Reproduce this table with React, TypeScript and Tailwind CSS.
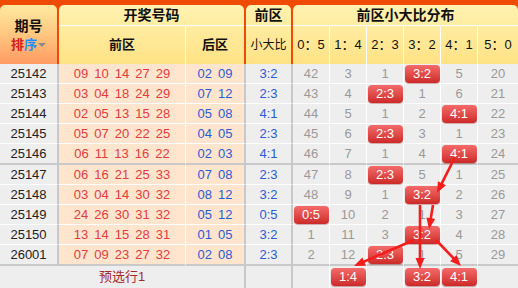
import React from "react";

type Row = {
  no: string;
  front: string[];
  back: string[];
  ratio: string;
  dist: number[];
  hit: number;
};

const labels = ["0:5", "1:4", "2:3", "3:2", "4:1", "5:0"];

const rows: Row[] = [
  { no: "25142", front: ["09", "10", "14", "27", "29"], back: ["02", "09"], ratio: "3:2", dist: [42, 3, 1, 0, 5, 20], hit: 3 },
  { no: "25143", front: ["03", "04", "18", "24", "29"], back: ["07", "12"], ratio: "2:3", dist: [43, 4, 0, 1, 6, 21], hit: 2 },
  { no: "25144", front: ["02", "05", "13", "15", "28"], back: ["05", "08"], ratio: "4:1", dist: [44, 5, 1, 2, 0, 22], hit: 4 },
  { no: "25145", front: ["05", "07", "20", "22", "25"], back: ["04", "05"], ratio: "2:3", dist: [45, 6, 0, 3, 1, 23], hit: 2 },
  { no: "25146", front: ["06", "11", "13", "16", "22"], back: ["02", "03"], ratio: "4:1", dist: [46, 7, 1, 4, 0, 24], hit: 4 },
  { no: "25147", front: ["06", "16", "21", "25", "33"], back: ["07", "08"], ratio: "2:3", dist: [47, 8, 0, 5, 1, 25], hit: 2 },
  { no: "25148", front: ["03", "04", "14", "30", "32"], back: ["08", "12"], ratio: "3:2", dist: [48, 9, 1, 0, 2, 26], hit: 3 },
  { no: "25149", front: ["24", "26", "30", "31", "32"], back: ["05", "12"], ratio: "0:5", dist: [0, 10, 2, 1, 3, 27], hit: 0 },
  { no: "25150", front: ["13", "14", "15", "28", "31"], back: ["01", "05"], ratio: "3:2", dist: [1, 11, 3, 0, 4, 28], hit: 3 },
  { no: "26001", front: ["07", "09", "23", "27", "32"], back: ["02", "08"], ratio: "2:3", dist: [2, 12, 0, 1, 5, 29], hit: 2 },
];

const arrows = [
  [455, 157, 437, 193],
  [433, 205, 429, 229],
  [420, 205, 420, 269],
  [414, 240, 354, 266],
  [436, 240, 461, 266],
];

const Badge = ({ text }: { text: string }) => (
  <span className="flex h-[18px] w-[35px] items-center justify-center rounded-[4px] bg-linear-to-b from-[#f46a6a] to-[#cc2828] text-[13px] text-white shadow-[0_1px_1px_rgba(120,0,0,0.35)]">
    {text}
  </span>
);

const Arrow = ({ a }: { a: number[] }) => {
  const [x1, y1, x2, y2] = a;
  const L = Math.hypot(x2 - x1, y2 - y1);
  const ux = (x2 - x1) / L;
  const uy = (y2 - y1) / L;
  const bx = x2 - ux * 11;
  const by = y2 - uy * 11;
  const pts = `${x2},${y2} ${bx - uy * 4.5},${by + ux * 4.5} ${bx + uy * 4.5},${by - ux * 4.5}`;
  return (
    <g>
      <line x1={x1} y1={y1} x2={bx + ux * 2} y2={by + uy * 2} stroke="#f51c1c" strokeWidth={2.6} />
      <polygon points={pts} fill="#f51c1c" />
    </g>
  );
};

export default function App() {
  return (
    <div className="relative h-[288px] w-[518px] overflow-hidden bg-white font-['Liberation_Sans','Noto_Sans_CJK_SC',sans-serif] text-[13px]">
      {/* header */}
      <div className="flex h-[64px] bg-[#ef4a06] pt-[5px] text-[#111]">
        <div className="mr-[2px] flex w-[57px] flex-col items-center justify-center rounded-t-[5px] bg-linear-to-b from-[#ffeaa0] via-[#ffc680] to-[#ff9a62]">
          <span className="text-[14px] font-bold leading-[18px]">期号</span>
          <span className="mt-[2px] flex items-center text-[13px] font-bold leading-[16px]">
            <span className="text-[#d42020]">排</span>
            <span className="text-[#1e90ff]">序</span>
            <span className="ml-[1px] h-0 w-0 border-x-[4px] border-t-[4px] border-x-transparent border-t-[#8a8a8a]" />
          </span>
        </div>
        <div className="mr-[2px] flex w-[185px] flex-col overflow-hidden rounded-t-[5px] bg-linear-to-b from-[#fff2b0] to-[#ffe285]">
          <div className="flex h-[21px] items-center justify-center border-b border-white text-[14px] font-bold">开奖号码</div>
          <div className="flex flex-1">
            <div className="flex w-[127px] items-center justify-center border-r border-white font-bold">前区</div>
            <div className="flex flex-1 items-center justify-center font-bold">后区</div>
          </div>
        </div>
        <div className="mr-[2px] flex w-[45px] flex-col overflow-hidden rounded-t-[5px] bg-linear-to-b from-[#fff2b0] to-[#ffe285]">
          <div className="flex h-[21px] items-center justify-center border-b border-white text-[14px] font-bold">前区</div>
          <div className="flex flex-1 items-center justify-center text-[12px]">小大比</div>
        </div>
        <div className="flex w-[225px] flex-col overflow-hidden rounded-t-[5px] bg-linear-to-b from-[#fff2b0] to-[#ffe285]">
          <div className="flex h-[21px] items-center justify-center border-b border-white text-[14px] font-bold">前区小大比分布</div>
          <div className="flex flex-1">
            {labels.map((l, i) => (
              <div
                key={l}
                className={i < 5 ? "flex w-[37px] items-center justify-center border-r border-white" : "flex w-[40px] items-center justify-center"}
              >
                {l.replace(":", "：")}
              </div>
            ))}
          </div>
        </div>
      </div>

      {/* data rows */}
      {rows.map((r, idx) => {
        const sep = idx === 4 || idx === 9;
        const b = sep ? "border-b-2 border-b-[#c9c9c9]" : "border-b border-b-white";
        return (
          <div key={r.no} className={sep ? "flex h-[21px]" : "flex h-[20px]"}>
            <div className={`flex w-[59px] items-center justify-center border-r-2 border-r-[#c8c8c8] bg-[#efeeee] text-[#222] ${b}`}>
              {r.no}
            </div>
            <div className={`flex w-[127px] items-center justify-center gap-[6px] border-r border-r-white bg-[#ffe5cd] text-[#e33b3e] ${b}`}>
              {r.front.map((n, i) => (
                <span key={i}>{n}</span>
              ))}
            </div>
            <div className={`flex w-[60px] items-center justify-center gap-[6px] border-r-2 border-r-[#c8c8c8] bg-[#ffe5cd] text-[#2a5bd7] ${b}`}>
              {r.back.map((n, i) => (
                <span key={i}>{n}</span>
              ))}
            </div>
            <div className={`flex w-[47px] items-center justify-center border-r-2 border-r-[#c8c8c8] bg-[#efeeee] text-[#2a5bd7] ${b}`}>
              {r.ratio}
            </div>
            {r.dist.map((v, i) => (
              <div
                key={i}
                className={`flex items-center justify-center bg-[#efeeee] text-[#999] ${i < 5 ? "w-[37px] border-r border-r-white" : "w-[40px]"} ${b}`}
              >
                {i === r.hit ? <Badge text={labels[i]} /> : v}
              </div>
            ))}
          </div>
        );
      })}

      {/* preselect row */}
      <div className="flex h-[22px] bg-[#eeeeee]">
        <div className="flex w-[246px] items-center justify-center border-r-2 border-r-[#c8c8c8] text-[#a32b2b]">预选行1</div>
        <div className="w-[47px] border-r-2 border-r-[#c8c8c8]" />
        {labels.map((l, i) => (
          <div
            key={l}
            className={i < 5 ? "flex w-[37px] items-start justify-center border-r border-r-white pt-[2px]" : "flex w-[40px] items-start justify-center pt-[2px]"}
          >
            {(i === 1 || i === 3 || i === 4) && <Badge text={l} />}
          </div>
        ))}
      </div>

      <svg className="pointer-events-none absolute left-0 top-0" width={518} height={288}>
        {arrows.map((a, i) => (
          <Arrow key={i} a={a} />
        ))}
      </svg>
    </div>
  );
}
